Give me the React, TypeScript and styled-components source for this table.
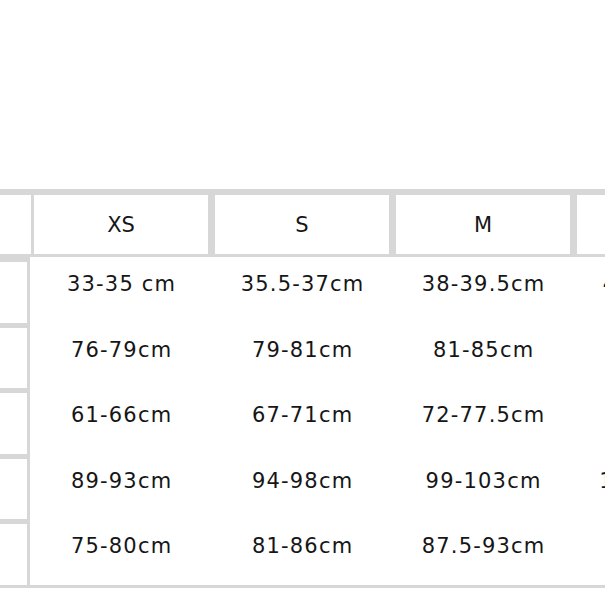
import styled, { createGlobalStyle } from 'styled-components';

const sizes = ['XS', 'S', 'M', 'L'];

const rows = [
    ['33-35 cm', '35.5-37cm', '38-39.5cm', '40-41.5cm'],
    ['76-79cm', '79-81cm', '81-85cm', '86-90cm'],
    ['61-66cm', '67-71cm', '72-77.5cm', '78-83cm'],
    ['89-93cm', '94-98cm', '99-103cm', '104-108cm'],
    ['75-80cm', '81-86cm', '87.5-93cm', '94-99cm'],
];

const GlobalStyle = createGlobalStyle`
    html, body {
        margin: 0;
        padding: 0;
        background: #fff;
        overflow: hidden;
    }

    body {
        font-family: 'DejaVu Sans', 'Liberation Sans', sans-serif;
        color: #161616;
    }
`;

export default function App() {
    return (
        <>
            <GlobalStyle />
            <Page>
                <Table>
                    <HeaderRow>
                        <HeaderCell $first />
                        {sizes.map((size) => (
                            <HeaderCell key={size}>{size}</HeaderCell>
                        ))}
                    </HeaderRow>
                    <Body>
                        <SideColumn>
                            {rows.map((_, i) => (
                                <SideCell key={i} />
                            ))}
                        </SideColumn>
                        <Grid>
                            {rows.map((row, i) =>
                                row.map((value, j) => (
                                    <ValueCell key={`${i}-${j}`}>{value}</ValueCell>
                                ))
                            )}
                        </Grid>
                    </Body>
                </Table>
            </Page>
        </>
    );
}

const Page = styled.main`
    width: 605px;
    height: 605px;
    padding-top: 189px;
    box-sizing: border-box;
    overflow: hidden;
`;

const Table = styled.section`
    width: 800px;
`;

const HeaderRow = styled.div`
    display: flex;
    background: #d7d7d7;
    padding: 6px 0 3px;
`;

const HeaderCell = styled.div<{ $first?: boolean }>`
    flex: none;
    width: ${(p) => (p.$first ? 31 : 174)}px;
    margin-right: ${(p) => (p.$first ? 3 : 7)}px;
    height: 59px;
    background: #fff;
    display: flex;
    align-items: center;
    justify-content: center;
    font-size: 21px;
`;

const Body = styled.div`
    display: flex;
    border-bottom: 3px solid #d7d7d7;
`;

const SideColumn = styled.div`
    flex: none;
    width: 27px;
    border-right: 3px solid #d7d7d7;
    display: flex;
    flex-direction: column;
`;

const SideCell = styled.div`
    height: 65.5px;
    box-sizing: border-box;
    border-top: 5px solid #d7d7d7;
    background: #fff;
`;

const Grid = styled.div`
    display: grid;
    grid-template-columns: repeat(4, 174px);
    grid-auto-rows: 65.5px;
    column-gap: 7px;
    padding-left: 4px;
`;

const ValueCell = styled.div`
    padding-top: 15px;
    padding-left: 1.2px;
    box-sizing: border-box;
    text-align: center;
    font-size: 21px;
    line-height: 24px;
    letter-spacing: 1.2px;
    white-space: nowrap;
`;
